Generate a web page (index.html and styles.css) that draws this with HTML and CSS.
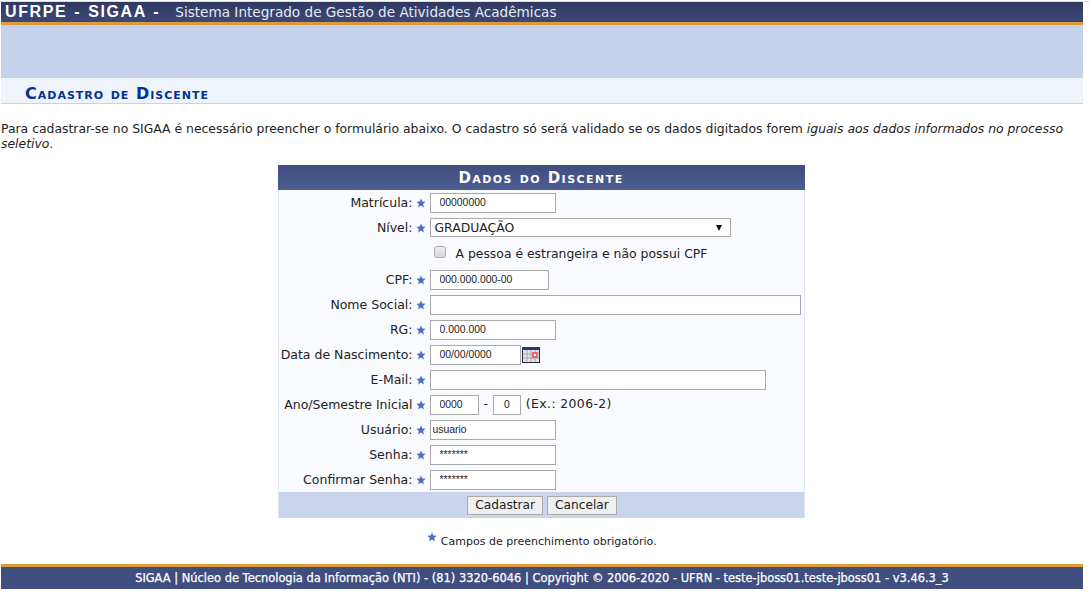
FILE: index.html
```html
<!DOCTYPE html>
<html lang="pt-BR">
<head>
    <meta charset="UTF-8">
    <title>SIGAA - Cadastro de Discente</title>
    <link rel="stylesheet" href="styles.css">
</head>
<body>
<div class="container">
    <div class="topo">
        <span class="sigla">UFRPE - SIGAA -</span>
        <span class="sistema">Sistema Integrado de Gestão de Atividades Acadêmicas</span>
    </div>
    <div class="painel"></div>
    <h2 class="titulo">Cadastro de Discente</h2>

    <p class="descricao">Para cadastrar-se no SIGAA é necessário preencher o formulário abaixo. O cadastro só será validado se os dados digitados forem <em>iguais aos dados informados no processo seletivo</em>.</p>

    <table class="formulario">
        <caption>Dados do Discente</caption>
        <tbody>
        <tr>
            <th>Matrícula:</th>
            <td class="req"><svg class="estrela" viewBox="0 0 10 10"><path d="M5 .5 6.3 3.6 9.6 3.8 7.1 6 7.9 9.4 5 7.6 2.1 9.4 2.9 6 .4 3.8 3.7 3.6z"/></svg></td>
            <td><input class="campo w126 recuo" type="text" value="00000000"></td>
        </tr>
        <tr>
            <th>Nível:</th>
            <td class="req"><svg class="estrela" viewBox="0 0 10 10"><path d="M5 .5 6.3 3.6 9.6 3.8 7.1 6 7.9 9.4 5 7.6 2.1 9.4 2.9 6 .4 3.8 3.7 3.6z"/></svg></td>
            <td>
                <div class="select">
                    <span>GRADUAÇÃO</span>
                    <i class="seta"></i>
                </div>
            </td>
        </tr>
        <tr class="linha-check">
            <th></th>
            <td></td>
            <td>
                <label class="estrangeiro">
                    <span class="check"></span>
                    A pessoa é estrangeira e não possui CPF
                </label>
            </td>
        </tr>
        <tr>
            <th>CPF:</th>
            <td class="req"><svg class="estrela" viewBox="0 0 10 10"><path d="M5 .5 6.3 3.6 9.6 3.8 7.1 6 7.9 9.4 5 7.6 2.1 9.4 2.9 6 .4 3.8 3.7 3.6z"/></svg></td>
            <td><input class="campo w119 recuo" type="text" value="000.000.000-00"></td>
        </tr>
        <tr>
            <th>Nome Social:</th>
            <td class="req"><svg class="estrela" viewBox="0 0 10 10"><path d="M5 .5 6.3 3.6 9.6 3.8 7.1 6 7.9 9.4 5 7.6 2.1 9.4 2.9 6 .4 3.8 3.7 3.6z"/></svg></td>
            <td><input class="campo w371" type="text"></td>
        </tr>
        <tr>
            <th>RG:</th>
            <td class="req"><svg class="estrela" viewBox="0 0 10 10"><path d="M5 .5 6.3 3.6 9.6 3.8 7.1 6 7.9 9.4 5 7.6 2.1 9.4 2.9 6 .4 3.8 3.7 3.6z"/></svg></td>
            <td><input class="campo w126 recuo" type="text" value="0.000.000"></td>
        </tr>
        <tr>
            <th>Data de Nascimento:</th>
            <td class="req"><svg class="estrela" viewBox="0 0 10 10"><path d="M5 .5 6.3 3.6 9.6 3.8 7.1 6 7.9 9.4 5 7.6 2.1 9.4 2.9 6 .4 3.8 3.7 3.6z"/></svg></td>
            <td class="com-icone"><input class="campo w91 recuo" type="text" value="00/00/0000"><svg class="calendario" viewBox="0 0 18 16">
                    <rect width="18" height="16" fill="#222a3c"/>
                    <rect y="0" width="18" height="3" fill="#1f3a7a"/>
                    <rect x="1" y="3" width="16" height="12" fill="#e4e4e8"/>
                    <path d="M5 3v12M9 3v12M13 3v12M1 7h16M1 11h16" stroke="#a9a9b2" fill="none"/>
                    <rect x="10" y="5" width="6" height="6" fill="#f2636b"/>
                    <rect x="12" y="7" width="2" height="2" fill="#fff"/>
                </svg></td>
        </tr>
        <tr>
            <th>E-Mail:</th>
            <td class="req"><svg class="estrela" viewBox="0 0 10 10"><path d="M5 .5 6.3 3.6 9.6 3.8 7.1 6 7.9 9.4 5 7.6 2.1 9.4 2.9 6 .4 3.8 3.7 3.6z"/></svg></td>
            <td><input class="campo w336" type="text"></td>
        </tr>
        <tr>
            <th>Ano/Semestre Inicial</th>
            <td class="req"><svg class="estrela" viewBox="0 0 10 10"><path d="M5 .5 6.3 3.6 9.6 3.8 7.1 6 7.9 9.4 5 7.6 2.1 9.4 2.9 6 .4 3.8 3.7 3.6z"/></svg></td>
            <td class="periodo">
                <input class="campo w49 recuo" type="text" value="0000">
                <span>-</span>
                <input class="campo w28 centro" type="text" value="0">
                <span class="exemplo">(Ex.: 2006-2)</span>
            </td>
        </tr>
        <tr>
            <th>Usuário:</th>
            <td class="req"><svg class="estrela" viewBox="0 0 10 10"><path d="M5 .5 6.3 3.6 9.6 3.8 7.1 6 7.9 9.4 5 7.6 2.1 9.4 2.9 6 .4 3.8 3.7 3.6z"/></svg></td>
            <td><input class="campo w126" type="text" value="usuario"></td>
        </tr>
        <tr>
            <th>Senha:</th>
            <td class="req"><svg class="estrela" viewBox="0 0 10 10"><path d="M5 .5 6.3 3.6 9.6 3.8 7.1 6 7.9 9.4 5 7.6 2.1 9.4 2.9 6 .4 3.8 3.7 3.6z"/></svg></td>
            <td><input class="campo w126 recuo" type="text" value="*******"></td>
        </tr>
        <tr>
            <th>Confirmar Senha:</th>
            <td class="req"><svg class="estrela" viewBox="0 0 10 10"><path d="M5 .5 6.3 3.6 9.6 3.8 7.1 6 7.9 9.4 5 7.6 2.1 9.4 2.9 6 .4 3.8 3.7 3.6z"/></svg></td>
            <td><input class="campo w126 recuo" type="text" value="*******"></td>
        </tr>
        </tbody>
        <tfoot>
        <tr>
            <td colspan="3">
                <button type="button">Cadastrar</button>
                <button type="button">Cancelar</button>
            </td>
        </tr>
        </tfoot>
    </table>

    <p class="obrigatorio">
        <svg class="estrela" viewBox="0 0 10 10"><path d="M5 .5 6.3 3.6 9.6 3.8 7.1 6 7.9 9.4 5 7.6 2.1 9.4 2.9 6 .4 3.8 3.7 3.6z"/></svg>
        Campos de preenchimento obrigatório.
    </p>

    <div class="rodape">SIGAA | Núcleo de Tecnologia da Informação (NTI) - (81) 3320-6046 | Copyright © 2006-2020 - UFRN - teste-jboss01.teste-jboss01 - v3.46.3_3</div>
</div>
</body>
</html>
```

FILE: styles.css
```css
body {
    font-family: "DejaVu Sans", Verdana, sans-serif;
    font-size: 12.4px;
    color: #222;
    background-color: white;
    margin: 1px 0 0;
    padding: 0 6px 0 1px;
    border-top: 1px solid #ddd;
}

.topo {
    height: 20px;
    display: flex;
    align-items: center;
    background: linear-gradient(#2f3a61, #3c4876);
    border-bottom: 3px solid #dc9c3c;
    color: white;
    padding-left: 4px;
}

.sigla {
    font-family: "Liberation Sans", Arial, sans-serif;
    font-weight: bold;
    font-size: 16px;
    letter-spacing: 1.6px;
    word-spacing: 1px;
}

.sistema {
    margin-left: 15px;
    font-size: 13.6px;
    color: #e8ebf4;
}

.painel {
    height: 53px;
    background-color: #c4d2eb;
}

.titulo {
    height: 25px;
    margin: 0;
    padding-left: 24px;
    background-color: #eff3fa;
    border-bottom: 1px solid #c4d2eb;
    color: #003399;
    font-size: 16px;
    line-height: 31px;
    font-variant: small-caps;
    letter-spacing: 1px;
}

.descricao {
    margin: 17px 0 0;
    line-height: 15px;
    color: #222;
}

.formulario {
    width: 527px;
    margin: 14px auto 0;
    position: relative;
    left: -1px;
    border-collapse: collapse;
    background-color: #f9fafd;
    border-left: 1px solid #e0e5f2;
    border-right: 1px solid #e0e5f2;
}

.formulario caption {
    height: 25px;
    background: linear-gradient(#3f4d7f, #4d5c90);
    color: white;
    font-weight: bold;
    font-size: 15px;
    line-height: 27px;
    font-variant: small-caps;
    letter-spacing: 1.45px;
}

.formulario tbody tr {
    height: 25px;
}

.formulario tbody tr.linha-check {
    height: 27px;
}

.formulario th {
    width: 134px;
    padding: 0;
    text-align: right;
    font-size: 12.5px;
    font-weight: normal;
    white-space: nowrap;
    color: #222;
}

.formulario .req {
    width: 17px;
    padding: 0;
}

.formulario .req .estrela {
    display: block;
    margin: 0 auto;
}

.formulario td {
    padding: 0;
    vertical-align: middle;
}

.formulario tfoot td {
    height: 26px;
    padding-left: 2px;
    background-color: #c8d5ec;
    text-align: center;
}

.estrela {
    width: 10px;
    height: 10px;
    fill: #4a6fc4;
    vertical-align: middle;
}

.campo {
    height: 20px;
    box-sizing: border-box;
    border: 1px solid #a9a9a9;
    background-color: white;
    font-family: "Liberation Sans", Arial, sans-serif;
    font-size: 10.4px;
    color: #222;
    padding: 0 2px;
    margin: 0;
    vertical-align: middle;
}

.recuo { padding-left: 9px; }
.centro { text-align: center; }
.w28 { width: 28px; }
.w49 { width: 49px; }
.w91 { width: 91px; }
.w119 { width: 119px; }
.w126 { width: 126px; }
.w336 { width: 336px; }
.w371 { width: 371px; }

.select {
    width: 301px;
    height: 19px;
    box-sizing: border-box;
    display: flex;
    align-items: center;
    justify-content: space-between;
    border: 1px solid #a9a9a9;
    background-color: white;
    padding: 0 8px 0 4px;
}

.seta {
    width: 0;
    height: 0;
    border-left: 3.5px solid transparent;
    border-right: 3.5px solid transparent;
    border-top: 6px solid #111;
}

.estrangeiro {
    display: flex;
    align-items: center;
    gap: 10px;
    padding-left: 4px;
}

.check {
    width: 10px;
    height: 10px;
    margin-top: -4px;
    border: 1px solid #aaa;
    border-radius: 3px;
    background: linear-gradient(#eee, #d8d8d8);
}

.com-icone {
    white-space: nowrap;
}

.calendario {
    width: 18px;
    height: 16px;
    vertical-align: middle;
    margin-left: 1px;
}

.periodo span {
    margin: 0 1px;
}

.periodo .exemplo {
    letter-spacing: 0.4px;
}

button {
    height: 19px;
    padding: 0 7px;
    font-family: "DejaVu Sans", Verdana, sans-serif;
    font-size: 12.2px;
    color: #222;
    background-color: #efefef;
    border: 1px solid #aaa;
}

.obrigatorio {
    margin: 14px 0 0;
    text-align: center;
    font-size: 11px;
    color: #222;
}

.obrigatorio .estrela {
    vertical-align: 3px;
}

.rodape {
    margin-top: 16px;
    height: 22px;
    line-height: 23px;
    background-color: #3f4d7f;
    border-top: 3px solid #dc9c3c;
    color: white;
    font-size: 11.45px;
    -webkit-text-stroke: 0.25px white;
    text-align: center;
}
```
